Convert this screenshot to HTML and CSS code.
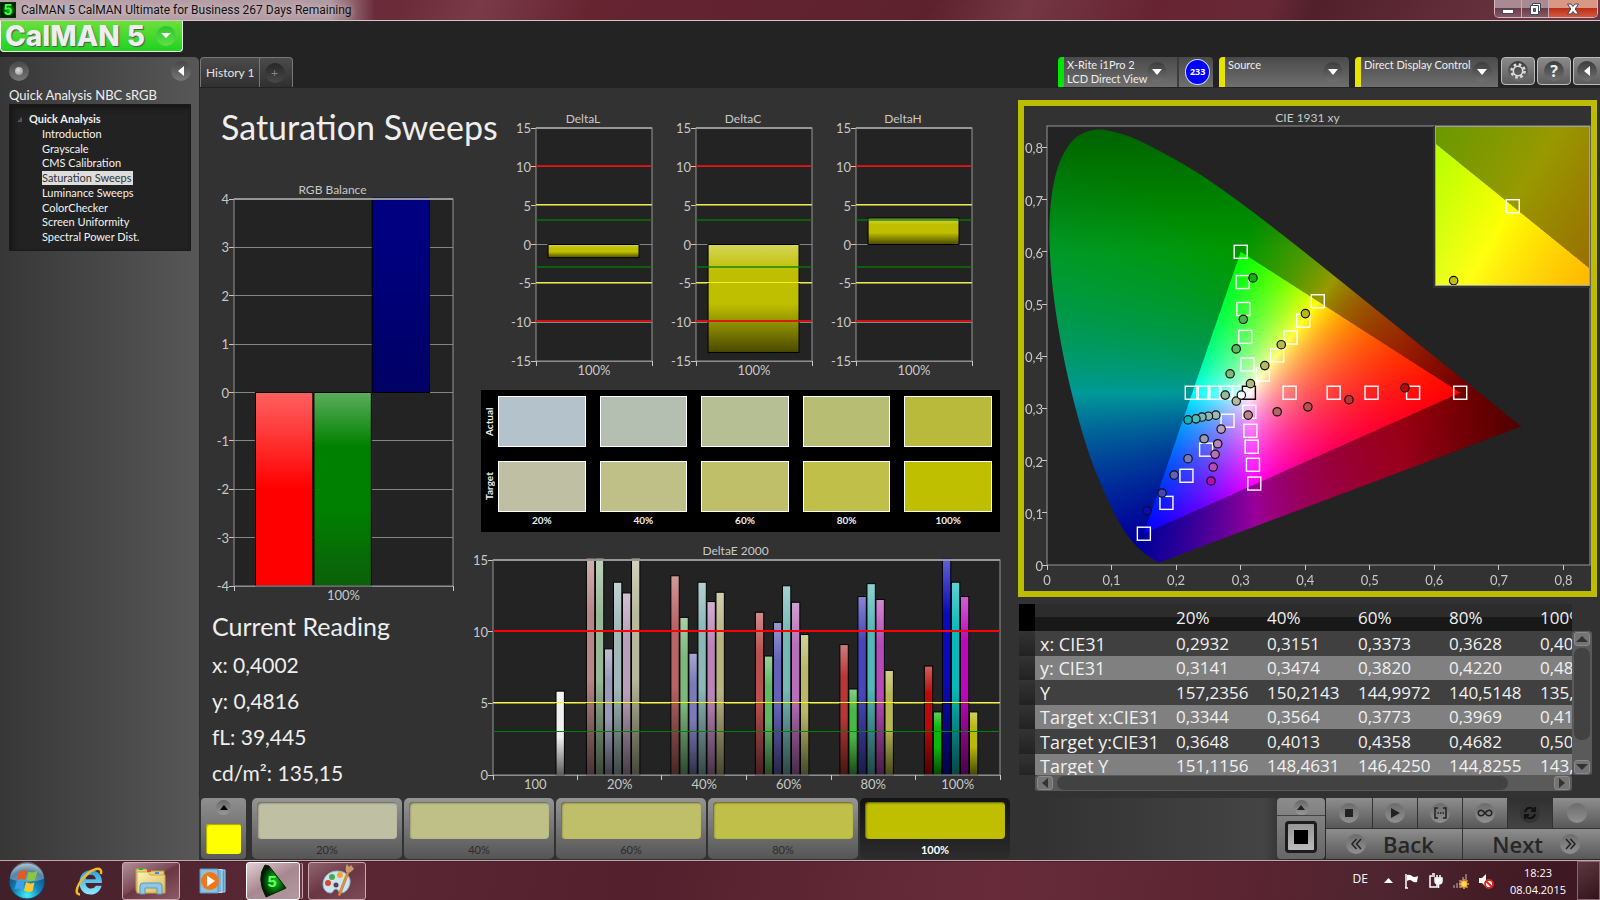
FILE: index.html
```html
<!DOCTYPE html>
<html lang="en">
<head>
    <meta charset="UTF-8">
    <meta name="viewport" content="width=device-width, initial-scale=1.0">
    <title>CalMAN 5</title>
    <link rel="stylesheet" href="styles.css">
</head>
<body>
    <!-- shared gradients and symbols -->
    <svg class="defs" aria-hidden="true">
        <defs>
            <linearGradient id="gloss" x1="0" y1="0" x2="0" y2="1">
                <stop offset="0" stop-color="#fff" stop-opacity=".35"/>
                <stop offset=".25" stop-color="#fff" stop-opacity="0"/>
                <stop offset=".55" stop-color="#000" stop-opacity="0"/>
                <stop offset="1" stop-color="#000" stop-opacity=".62"/>
            </linearGradient>
            <linearGradient id="glossRed" x1="0" y1="0" x2="0" y2="1">
                <stop offset="0" stop-color="#fff" stop-opacity=".38"/>
                <stop offset=".5" stop-color="#fff" stop-opacity="0"/>
            </linearGradient>
            <linearGradient id="glossGreen" x1="0" y1="0" x2="0" y2="1">
                <stop offset="0" stop-color="#fff" stop-opacity=".36"/>
                <stop offset=".28" stop-color="#fff" stop-opacity="0"/>
                <stop offset=".6" stop-color="#222" stop-opacity="0"/>
                <stop offset="1" stop-color="#222" stop-opacity=".35"/>
            </linearGradient>
            <linearGradient id="glossBlue" x1="0" y1="0" x2="0" y2="1">
                <stop offset=".2" stop-color="#000" stop-opacity="0"/>
                <stop offset="1" stop-color="#000" stop-opacity=".22"/>
            </linearGradient>
            <radialGradient id="orb" cx=".5" cy=".9" r=".9">
                <stop offset="0" stop-color="#3ff0ff"/>
                <stop offset=".4" stop-color="#1484b8"/>
                <stop offset=".75" stop-color="#14507e"/>
                <stop offset="1" stop-color="#8fb4c8"/>
            </radialGradient>
            <radialGradient id="glow5" cx=".55" cy=".5" r=".5">
                <stop offset="0" stop-color="#12c41c"/>
                <stop offset=".5" stop-color="#067a0c"/>
                <stop offset="1" stop-color="#021a04"/>
            </radialGradient>
            <linearGradient id="folder" x1="0" y1="0" x2="1" y2="1">
                <stop offset="0" stop-color="#fdf3b8"/>
                <stop offset="1" stop-color="#d9b95a"/>
            </linearGradient>
            <linearGradient id="ie" x1="0" y1="0" x2="0" y2="1">
                <stop offset="0" stop-color="#2aa0e0"/>
                <stop offset="1" stop-color="#8fe8ff"/>
            </linearGradient>
        </defs>
    </svg>

    <header class="titlebar">
        <svg class="app-icon" viewBox="0 0 16 16">
            <rect width="16" height="16" fill="#031"/>
            <rect x="1" y="1" width="14" height="14" fill="url(#glow5)"/>
            <text x="8" y="13" text-anchor="middle">5</text>
        </svg>
        <span class="window-title">CalMAN 5 CalMAN Ultimate for Business 267 Days Remaining</span>
        <div class="window-buttons">
            <button class="win-btn" aria-label="Minimize">
                <svg width="14" height="12"><rect x="1.500" y="6.500" width="11" height="4" fill="#fff" stroke="#444a5c"/></svg>
            </button>
            <button class="win-btn" aria-label="Restore">
                <svg width="14" height="14"><path d="M4.500 1.500h8v8h-8z" fill="#fff" stroke="#444a5c"/><path d="M2.500 3.500h8v9h-8z" fill="#fff" stroke="#444a5c"/><path d="M5.500 6.500h2v3h-2z" fill="#8a5562" stroke="#444a5c"/></svg>
            </button>
            <button class="win-btn close" aria-label="Close">
                <svg width="14" height="12"><path d="M1.500 1h3.500l2 2.500L9 1h3.500L9.200 6l3.300 5H9L7 8.500 5 11H1.500l3.300-5z" fill="#fff" stroke="#444a5c"/></svg>
            </button>
        </div>
    </header>

    <div class="brand-row">
        <button class="logo">
            <span>CalMAN</span><span>5</span>
            <i class="round logo-arrow"><svg width="10" height="6"><path d="M0 0h10L5 5z" fill="#fff"/></svg></i>
        </button>
    </div>

    <div class="workspace">
        <aside class="sidebar">
            <div class="sidebar-tools">
                <button class="round" aria-label="Options"><i class="bead"></i></button>
                <button class="round" aria-label="Collapse"><svg width="6" height="10"><path d="M6 0v10L0 5z" fill="#fff"/></svg></button>
            </div>
            <h2>Quick Analysis NBC sRGB</h2>
            <nav class="tree">
                <strong><svg width="5" height="5"><path d="M5 0v5H0z" fill="#555"/></svg>Quick Analysis</strong>
                <a href="#">Introduction</a>
                <a href="#">Grayscale</a>
                <a href="#">CMS Calibration</a>
                <a href="#" class="selected">Saturation Sweeps</a>
                <a href="#">Luminance Sweeps</a>
                <a href="#">ColorChecker</a>
                <a href="#">Screen Uniformity</a>
                <a href="#">Spectral Power Dist.</a>
            </nav>
        </aside>

        <main class="main">
            <div class="toolbar">
                <div class="tabs">
                    <button class="tab">History 1</button>
                    <button class="tab add" aria-label="Add tab"><i class="round">+</i></button>
                </div>
                <div class="devices">
                    <div class="device meter">
                        <button class="device-btn"><span>X-Rite i1Pro 2<br>LCD Direct View</span><i class="round"><svg width="10" height="6"><path d="M0 0h10L5 6z" fill="#fff"/></svg></i></button>
                        <span class="badge">233</span>
                    </div>
                    <div class="device source">
                        <button class="device-btn"><span>Source</span><i class="round"><svg width="10" height="6"><path d="M0 0h10L5 6z" fill="#fff"/></svg></i></button>
                    </div>
                    <div class="device display">
                        <button class="device-btn"><span>Direct Display Control</span><i class="round"><svg width="10" height="6"><path d="M0 0h10L5 6z" fill="#fff"/></svg></i></button>
                    </div>
                    <button class="square-btn" aria-label="Settings"><i class="round"><svg width="16" height="16" viewBox="0 0 16 16"><circle cx="8" cy="8" r="6.500" fill="none" stroke="#ddd" stroke-width="2.500" stroke-dasharray="2.550 2.550"/><circle cx="8" cy="8" r="4.700" fill="none" stroke="#ddd" stroke-width="1.600"/></svg></i></button>
                    <button class="square-btn help" aria-label="Help"><i class="round">?</i></button>
                    <button class="square-btn last" aria-label="Collapse panel"><i class="round"><svg width="6" height="10"><path d="M6 0v10L0 5z" fill="#fff"/></svg></i></button>
                </div>
            </div>

            <div class="content">
                <section class="col-left">
                    <h1>Saturation Sweeps</h1>
                    <div class="chart rgb">
                        <h3>RGB Balance</h3>
                        <svg class="plot" id="rgbBalance"></svg>
                    </div>
                    <div class="readings">
                        <h2>Current Reading</h2>
                        <p>x: 0,4002</p>
                        <p>y: 0,4816</p>
                        <p>fL: 39,445</p>
                        <p>cd/m²: 135,15</p>
                    </div>
                </section>

                <section class="col-mid">
                    <div class="deltas">
                        <div class="chart"><h3>DeltaL</h3><svg class="plot" id="deltaL"></svg></div>
                        <div class="chart"><h3>DeltaC</h3><svg class="plot" id="deltaC"></svg></div>
                        <div class="chart"><h3>DeltaH</h3><svg class="plot" id="deltaH"></svg></div>
                    </div>
                    <div class="swatches" id="swatches"></div>
                    <div class="chart delta-e">
                        <h3>DeltaE 2000</h3>
                        <svg class="plot" id="deltaE"></svg>
                    </div>
                </section>

                <section class="col-right">
                    <div class="chart cie">
                        <h3>CIE 1931 xy</h3>
                        <div class="cie-plot">
                            <canvas id="cieCanvas" width="1086" height="878"></canvas>
                            <svg class="plot" id="cie"></svg>
                            <div class="cie-inset">
                                <canvas id="insetCanvas" width="310" height="320"></canvas>
                                <svg class="plot" id="inset"></svg>
                            </div>
                        </div>
                    </div>
                    <div class="data-grid">
                        <div class="table-view">
                            <table>
                                <thead><tr><th class="row-head"></th><th class="name"></th><th>20%</th><th>40%</th><th>60%</th><th>80%</th><th>100%</th></tr></thead>
                                <tbody id="rows"></tbody>
                            </table>
                        </div>
                        <div class="vscroll">
                            <button aria-label="Scroll up"><svg width="12" height="6"><path d="M6 0l6 6H0z"/></svg></button>
                            <i class="thumb"></i>
                            <button aria-label="Scroll down"><svg width="12" height="6"><path d="M6 6l6-6H0z"/></svg></button>
                        </div>
                        <div class="hscroll">
                            <button aria-label="Scroll left"><svg width="6" height="10"><path d="M0 5l6-5v10z"/></svg></button>
                            <i class="thumb"></i>
                            <button aria-label="Scroll right"><svg width="6" height="10"><path d="M6 5L0 0v10z"/></svg></button>
                        </div>
                    </div>
                </section>
            </div>

            <footer class="bottom-bar">
                <button class="well" aria-label="Current colour"><i class="round small"><svg width="8" height="5"><path d="M4 0l4 5H0z"/></svg></i><i class="well-color"></i></button>
                <div class="steps" id="steps"></div>
                <div class="transport">
                    <div class="pattern">
                        <button class="pattern-up" aria-label="Patterns"><i class="round small"><svg width="8" height="5"><path d="M4 0l4 5H0z"/></svg></i></button>
                        <button class="pattern-box" aria-label="Window pattern"><i></i></button>
                    </div>
                    <div class="controls">
                        <button aria-label="Stop"><i class="round"><svg width="8" height="8"><path d="M0 0h8v8H0z"/></svg></i></button>
                        <button aria-label="Play"><i class="round"><svg width="9" height="10"><path d="M0 0l9 5-9 5z"/></svg></i></button>
                        <button aria-label="Read series"><i class="round"><svg width="13" height="12" fill="none" stroke="#222" stroke-width="1.500"><path d="M4 1H1v10h3M9 1h3v10H9M3.500 6h1.500M6 6h1.500M8.500 6H10"/></svg></i></button>
                        <button aria-label="Continuous"><i class="round"><svg width="16" height="8" fill="none" stroke="#222" stroke-width="1.500"><path d="M8 4C6.500 2 5.500 1.200 4 1.200a2.800 2.800 0 0 0 0 5.600C5.500 6.800 6.500 6 8 4s2.500-2.800 4-2.800a2.800 2.800 0 0 1 0 5.600C10.500 6.800 9.500 6 8 4z"/></svg></i></button>
                        <button class="on" aria-label="Refresh"><i class="round"><svg width="14" height="14" fill="none" stroke="#111" stroke-width="2"><path d="M2 6a5 5 0 0 1 9-2M12 8a5 5 0 0 1-9 2M12 1v4H8M2 13V9h4"/></svg></i></button>
                        <button aria-label="Idle"><i class="round"></i></button>
                        <button class="wide back"><i class="round"><svg width="11" height="12" fill="none" stroke="#222" stroke-width="1.500"><path d="M5.500 1L1 6l4.500 5M10 1L5.500 6l4.500 5"/></svg></i><span>Back</span></button>
                        <button class="wide next"><span>Next</span><i class="round"><svg width="11" height="12" fill="none" stroke="#222" stroke-width="1.500"><path d="M1 1l4.500 5L1 11M5.500 1L10 6l-4.500 5"/></svg></i></button>
                    </div>
                </div>
            </footer>
        </main>
    </div>

    <div class="taskbar">
        <button class="start" aria-label="Start">
            <svg width="38" height="38" viewBox="0 0 38 38">
                <circle cx="19" cy="19" r="18" fill="url(#orb)" stroke="#1b3444"/>
                <path d="M2 17a17 17 0 0 1 34 0q-17 6-34 0z" fill="#fff" opacity=".3"/>
                <path d="M11 10q4-3 8-1l-2 9q-4-2-8 0z" fill="#e8571c"/>
                <path d="M20.500 9.500q4 2 9-.5l-2.500 9q-4 2-8.500 0z" fill="#8cc63f"/>
                <path d="M8.500 19.500q4-2 8 0l-2 8q-4-2-8 0z" fill="#3f9fe8"/>
                <path d="M18 20q4 2.500 8.500.5l-2 8.500q-4 2-8.500-.5z" fill="#fdc82f"/>
            </svg>
        </button>
        <button class="task plain ie" aria-label="Internet Explorer">
            <svg width="34" height="34" viewBox="0 0 34 34">
                <path d="M29 19H12.500c.3 3.500 2.500 5.500 5.500 5.500 2.300 0 3.800-1 4.700-2.800h6C27 27.500 23 30.500 17.800 30.500 11 30.500 6.500 26 6.500 18.500S11.200 6.300 17.800 6.300C25 6.300 29.200 11.300 29 19zM12.600 15.300h10.200c-.3-2.800-2.200-4.500-4.900-4.500-2.800 0-4.800 1.700-5.300 4.500z" fill="url(#ie)"/>
                <path d="M28 10c1-4-1-6-5-5-6 1.500-13 8-17 15-3 5.500-3.500 10.500 1 10.500" fill="none" stroke="#f5b921" stroke-width="2.500"/>
            </svg>
        </button>
        <button class="task open explorer" aria-label="Explorer">
            <svg width="34" height="30" viewBox="0 0 34 30">
                <path d="M2 3h10l2 2h16v20H2z" fill="#e8cf7a" stroke="#b89a48"/>
                <path d="M3 6h11l2 3h15v18H3z" fill="url(#folder)" stroke="#c9a94f"/>
                <rect x="5" y="2" width="4" height="2" fill="#2fae3a"/><rect x="13" y="4" width="4" height="2" fill="#d84b38"/><rect x="21" y="6" width="4" height="2" fill="#3a8fe0"/>
                <path d="M6 28v-8q0-3 3-3h16q3 0 3 3v8h-5v-6H11v6z" fill="#8fc8e4" stroke="#5a9abc"/>
            </svg>
        </button>
        <button class="task plain wmp" aria-label="Media Player">
            <svg width="28" height="26" viewBox="0 0 28 26">
                <path d="M8 2h18v22H8z" fill="#4f9cc8" stroke="#a8d4ec"/><path d="M4 1.500h19v23H4z" fill="#78b4d8" stroke="#c0e0f0"/>
                <path d="M1 1h18v24H1z" fill="#8fc0dc" stroke="#5a94b8"/>
                <circle cx="11" cy="13" r="9" fill="#f0761c"/><path d="M8 7.500l8 5.500-8 5.500z" fill="#fff"/>
            </svg>
        </button>
        <button class="task open active" aria-label="CalMAN">
            <svg width="30" height="34" viewBox="0 0 30 34">
                <path d="M7 1l4 1 17 22-20 9Q-2 14 7 1z" fill="url(#glow5)" stroke="#020"/>
                <text x="14" y="23" text-anchor="middle">5</text>
            </svg>
        </button>
        <button class="task open paint" aria-label="Paint">
            <svg width="34" height="34" viewBox="0 0 34 34">
                <path d="M17 7c9 0 14 6 13 12s-5 10-9 10c-3 0-2-4-5-4s-2 3-5 4c-4 0-8-3-8-9S8 7 17 7z" fill="#cfe4f2" stroke="#8fb4cc"/>
                <circle cx="8" cy="19" r="3" fill="#d9442c"/><circle cx="12" cy="13" r="3" fill="#3fae49"/><circle cx="20" cy="11" r="3" fill="#f2a828"/><circle cx="16" cy="21" r="2.500" fill="#5a4048"/>
                <path d="M27 8l2 1-9 23-2-1z" fill="#e8953a" stroke="#b06a20" stroke-width=".6"/>
                <path d="M26 8q-1-5 1-8l2 3 2-2 3 4q-3 3-5 4z" fill="#c99a6a"/>
            </svg>
        </button>
        <div class="tray">
            <span class="lang">DE</span>
            <svg class="more" width="9" height="5"><path d="M4.500 0L9 5H0z" fill="#fff"/></svg>
            <svg width="16" height="16" viewBox="0 0 16 16"><path d="M2 1v14M1 15h3" stroke="#fff" stroke-width="1.500"/><path d="M3 2q3-1 5 1t6 0l-1 6q-3 1-5-1T3 8z" fill="#fff"/></svg>
            <svg width="16" height="16" viewBox="0 0 16 16" fill="none" stroke="#fff" stroke-width="1.500"><path d="M7 3H2v11h7V11M4 1h3"/><path d="M7 5h7v3q0 3-3.500 3T7 8zM9 2v3M12 2v3M10.500 11v4" /><path d="M8 6h5v2q0 2-2.500 2T8 8z" fill="#fff"/></svg>
            <svg width="18" height="16" viewBox="0 0 18 16"><path d="M1 12h2v3H1zM4 10h2v5H4zM7 7h2v8H7zM10 4h2v11h-2zM13 1h2v14h-2z" fill="#8a6a72"/><circle cx="12" cy="11" r="3" fill="#ffd23a"/><path d="M12 6v10M7 11h10M8.500 7.500l7 7M15.500 7.500l-7 7" stroke="#f5a81c" stroke-width="1.500"/><circle cx="12" cy="11" r="2.500" fill="#ffd95a"/></svg>
            <svg width="16" height="16" viewBox="0 0 16 16"><path d="M1 5h3l4-4v13l-4-4H1z" fill="#fff"/><circle cx="11" cy="11" r="4" fill="#fff" stroke="#e0281c" stroke-width="1.800"/><path d="M8 8l6 6" stroke="#e0281c" stroke-width="1.800"/></svg>
            <time class="clock">18:23<br>08.04.2015</time>
            <button class="show-desktop" aria-label="Show desktop"></button>
        </div>
    </div>

    <script src="charts.js"></script>
</body>
</html>
```
FILE: styles.css
```css
* {
    box-sizing: border-box;
}

body {
    margin: 0;
    height: 100vh;
    display: flex;
    flex-direction: column;
    overflow: hidden;
    background: #232323;
    color: #eee;
    font-family: Lato, "Liberation Sans", sans-serif;
    font-size: 12px;
}

h1, h2, h3, p {
    margin: 0;
    font-weight: 400;
}

button {
    border: 0;
    padding: 0;
    margin: 0;
    background: none;
    color: inherit;
    font: inherit;
    cursor: pointer;
}

i {
    font-style: normal;
}

svg {
    display: block;
    flex: none;
}

.defs {
    position: absolute;
    width: 0;
    height: 0;
}

.round {
    display: flex;
    align-items: center;
    justify-content: center;
    flex: none;
    width: 20px;
    height: 20px;
    border-radius: 50%;
    background: linear-gradient(#3c3c3c, #707070);
}

.round.small {
    width: 15px;
    height: 15px;
    background: linear-gradient(#666, #999);
}

/* window title */
.titlebar {
    display: flex;
    align-items: center;
    flex: none;
    height: 21px;
    border-bottom: 1px solid #d9c3ca;
    background:
        linear-gradient(90deg, rgba(190, 170, 178, .95) 0, rgba(185, 165, 172, .9) 330px, rgba(150, 110, 120, 0) 375px),
        linear-gradient(115deg, #6b2b39 25%, #7a3a47 30%, #662431 37%, #5d212e 58%, #743744 64%, #672331 72%, #682936 79%, #50202b 82%, #6b3541 96%);
}

.app-icon {
    width: 16px;
    height: 16px;
}

.app-icon text {
    font: bold 14px Inter, sans-serif;
    fill: #4f4;
}

.window-title {
    margin-left: 5px;
    color: #111;
    font: 12px/20px Roboto, sans-serif;
    white-space: nowrap;
    text-shadow: 0 0 6px rgba(255, 255, 255, .7);
}

.window-buttons {
    display: flex;
    align-self: flex-start;
    margin-left: auto;
    margin-right: 2px;
    border: 1px solid #d0b9bf;
    border-top: 0;
    border-radius: 0 0 5px 5px;
    overflow: hidden;
}

.win-btn {
    display: flex;
    align-items: center;
    justify-content: center;
    width: 27px;
    height: 17px;
    border-right: 1px solid #c7aab2;
    background: linear-gradient(#a98a93 45%, #6d3b48 50%, #855a66);
}

.win-btn.close {
    width: 48px;
    border-right: 0;
    background: linear-gradient(#d99884 45%, #b8301a 50%, #d8583c);
}

/* logo */
.brand-row {
    flex: none;
    height: 36px;
}

.logo {
    display: flex;
    align-items: center;
    gap: 7px;
    width: 183px;
    height: 31px;
    padding-left: 4px;
    border: 1px solid #efe;
    border-top: 0;
    border-radius: 0 0 4px 4px;
    background: linear-gradient(#6be03c, #20d220);
    color: #eee;
    font: 800 28px/28px Inter, sans-serif;
    text-shadow: 1px 1px 1px #555;
}

.logo-arrow {
    margin-left: auto;
    margin-right: 6px;
    background: linear-gradient(#2cc42c, #62e048);
}

.workspace {
    display: flex;
    flex: 1;
    min-height: 0;
}

/* sidebar */
.sidebar {
    flex: none;
    width: 199px;
    padding: 4px 8px 0 9px;
    border-radius: 0 5px 0 0;
    background: linear-gradient(90deg, #373737, #575757);
}

.sidebar-tools {
    display: flex;
    justify-content: space-between;
}

.sidebar-tools .round {
    background: linear-gradient(#474747, #777);
}

.bead {
    width: 8px;
    height: 8px;
    border-radius: 50%;
    background: radial-gradient(circle at 40% 40%, #ddd, #888);
}

.sidebar h2 {
    margin-top: 5px;
    font-size: 13px;
    line-height: 18px;
    white-space: nowrap;
}

.tree {
    display: flex;
    flex-direction: column;
    justify-content: space-between;
    align-items: flex-start;
    height: 147px;
    padding: 7px 0 6px 32px;
    border: 1px solid #1a1a1a;
    background: #222;
    box-shadow: inset 3px 3px 5px #161616;
    font-size: 11px;
    line-height: 14px;
}

.tree strong {
    display: flex;
    align-items: center;
    gap: 7px;
    margin-left: -25px;
}

.tree a {
    padding-right: 1px;
    color: #f2f2f2;
    text-decoration: none;
}

.tree .selected {
    background: #ddd;
    color: #333;
}

/* toolbar */
.main {
    display: flex;
    flex-direction: column;
    flex: 1;
    min-width: 0;
}

.toolbar {
    display: flex;
    justify-content: space-between;
    flex: none;
    height: 31px;
    padding-left: 1px;
}

.tabs,
.devices {
    display: flex;
}

.tabs {
    height: 30px;
    border: 1px solid #777;
    border-bottom: 0;
    border-radius: 4px 4px 0 0;
    background: linear-gradient(#4b4b4b, #303030);
}

.tab {
    padding: 0 4px 0 5px;
    color: #e4e4e4;
    font-size: 12px;
}

.tab.add {
    width: 33px;
    border-left: 1px solid #777;
    color: #888;
}

.tab.add .round {
    background: linear-gradient(#272727, #484848);
}

.devices {
    gap: 6px;
}

.device {
    display: flex;
    height: 30px;
    border-left: 6px solid #e8e400;
    border-radius: 4px 4px 0 0;
    background: linear-gradient(#4a4a4a, #6f6f6f);
}

.device.meter {
    width: 155px;
    border-left-color: #00e800;
}

.device.source {
    width: 130px;
}

.device.display {
    width: 143px;
}

.device-btn {
    display: flex;
    align-items: flex-start;
    justify-content: space-between;
    flex: 1;
    padding: 1px 6px 0 3px;
    font-size: 11px;
    line-height: 14px;
    text-align: left;
    white-space: nowrap;
}

.device-btn .round {
    margin-top: 4px;
}

.meter .device-btn {
    padding-right: 10px;
    border-right: 2px solid #3c3c3c;
}

.badge {
    width: 26px;
    height: 26px;
    margin: 2px 3px 0 6px;
    border: 1px solid #cfd4ff;
    border-radius: 50%;
    background: #00f;
    color: #fff;
    font: bold 9px/24px "Open Sans", sans-serif;
    text-align: center;
}

.square-btn {
    display: flex;
    align-items: center;
    justify-content: center;
    width: 34px;
    height: 28px;
    margin-left: -4px;
    border: 1px solid #bbb;
    border-radius: 4px;
    background: linear-gradient(#8a8a8a, #5c5c5c);
}

.display + .square-btn {
    margin-left: -3px;
}

.square-btn.help {
    font: bold 16px "Open Sans", sans-serif;
}

.square-btn.last {
    width: 27px;
    border-right: 0;
    border-radius: 4px 0 0 4px;
}

/* dashboard */
.content {
    display: grid;
    grid-template-columns: 270fr 539fr 590fr;
    flex: 1;
    min-height: 0;
    padding-left: 1px;
    border-left: 1px solid #282828;
    background: #323232;
}

.content > section {
    display: flex;
    flex-direction: column;
    min-width: 0;
    min-height: 0;
}

.col-left h1 {
    height: 88px;
    padding-left: 20px;
    font-size: 34px;
    line-height: 78px;
    white-space: nowrap;
}

.chart {
    display: flex;
    flex-direction: column;
    min-width: 0;
    min-height: 0;
    padding: 0 0 23px 22px;
}

.chart h3 {
    flex: none;
    height: 20px;
    margin-left: -22px;
    color: #c8c8c8;
    font-size: 12px;
    line-height: 21px;
    text-align: center;
}

.plot {
    flex: 1;
    width: 100%;
    min-height: 0;
    overflow: visible;
}

.plot line {
    shape-rendering: crispEdges;
}

.plot text {
    fill: #c8c8c8;
    font-size: 13px;
}

.chart.rgb {
    flex: 1;
    margin: 3px 18px 0 11px;
}

.readings {
    flex: none;
    padding: 0 0 7px 11px;
    font-size: 21px;
    line-height: 36px;
}

.readings h2 {
    margin-bottom: 3px;
    font-size: 25px;
    line-height: 35px;
}

.deltas {
    display: grid;
    grid-template-columns: repeat(3, 1fr);
    gap: 22px;
    flex: 303;
    min-height: 0;
    padding: 20px 38px 0 43px;
}

.swatches {
    display: grid;
    grid-template-columns: 2px repeat(5, 1fr);
    grid-template-rows: 51px 51px auto;
    gap: 14px;
    flex: none;
    height: 142px;
    margin: 6px 10px 0;
    padding: 6px 8px 0 1px;
    background: #000;
}

.swatches .side {
    width: 14px;
    writing-mode: vertical-rl;
    transform: rotate(180deg);
    font-size: 10px;
    font-weight: 700;
    line-height: 14px;
    text-align: center;
}

.swatches .patch {
    border: 1px solid #fff;
}

.swatches .caption {
    margin-top: -13px;
    font-size: 10px;
    font-weight: 700;
    line-height: 14px;
    text-align: center;
}

.chart.delta-e {
    flex: 258;
    margin: 8px 10px 0 0;
}

/* chromaticity diagram */
.chart.cie {
    flex: 1;
    margin: 12px 3px 0 8px;
    padding: 0 1px 26px 23px;
    border: 6px solid #bdbd00;
}

.chart.cie h3 {
    line-height: 24px;
}

.cie-plot {
    position: relative;
    display: flex;
    flex: 1;
    min-height: 0;
    background: #232323;
}

.cie-plot canvas {
    position: absolute;
    inset: 0;
    width: 100%;
    height: 100%;
}

.cie-plot .plot {
    position: relative;
}

.cie-inset {
    position: absolute;
    top: 0;
    right: 0;
    display: flex;
    width: 29%;
    height: 37%;
    border-left: 2px solid #323232;
    border-bottom: 2px solid #323232;
}

.cie-inset .plot {
    overflow: hidden;
    border: 1px solid #a0a0a0;
}

/* data grid */
.data-grid {
    display: grid;
    grid-template-columns: 16px 1fr 20px;
    grid-template-rows: 27px 144px 16px;
    flex: none;
    margin: 7px 8px 7px 9px;
}

.table-view {
    grid-area: 1 / 1 / 3 / 3;
    overflow: hidden;
}

table {
    width: 608px;
    table-layout: fixed;
    border-collapse: collapse;
    font: 17px/24px "Open Sans", sans-serif;
    color: #f0f0f0;
}

th,
td {
    width: 91px;
    padding: 0 0 0 4px;
    font-weight: 400;
    text-align: left;
    white-space: nowrap;
}

thead tr {
    height: 27px;
    background: linear-gradient(#2c2c2c 48%, #181818 50%);
}

tbody tr {
    height: 25px;
    background: #404040;
}

tbody tr:nth-child(even) {
    height: 24px;
    background: #808080;
}

tbody .row-head {
    background: linear-gradient(#333, #222);
}

.row-head {
    width: 16px;
    padding: 0;
}

thead .row-head {
    background: #000;
}

.name {
    width: 137px;
}

tbody .name {
    padding-left: 5px;
    font-size: 18px;
}

.vscroll,
.hscroll {
    display: flex;
    align-items: center;
    background: #5a5a5a;
    border-radius: 3px;
}

.vscroll {
    grid-area: 2 / 3;
    flex-direction: column;
}

.hscroll {
    grid-area: 3 / 2;
}

.vscroll button,
.hscroll button {
    display: flex;
    align-items: center;
    justify-content: center;
    width: 16px;
    height: 14px;
    margin: 1px 2px;
    border: 1px solid #8a8a8a;
    border-radius: 3px;
    background: #747474;
    fill: #333;
}

.thumb {
    border-radius: 7px;
    background: #424242;
}

.vscroll .thumb {
    width: 16px;
    height: 92px;
    margin: 1px 0 auto;
}

.hscroll .thumb {
    width: 84%;
    height: 14px;
    margin: 0 auto 0 2px;
}

/* bottom bar */
.bottom-bar {
    display: flex;
    flex: none;
    height: 62px;
    padding: 0 0 1px 2px;
    background: linear-gradient(90deg, #323232 60%, #444 76%, #2a2a2a 78%);
}

.well {
    display: flex;
    flex-direction: column;
    align-items: center;
    justify-content: space-between;
    width: 45px;
    padding: 2px 0 5px;
    border-radius: 4px;
    background: linear-gradient(#8f8f8f, #5a5a5a);
}

.well-color {
    width: 35px;
    height: 30px;
    border-radius: 3px;
    background: #ff0;
    box-shadow: inset 1px 1px 1px #a8a800;
}

.steps {
    display: flex;
    gap: 2px;
    margin-left: 6px;
}

.step {
    width: 150px;
    padding: 4px 5px 0;
    border-radius: 5px;
    background: linear-gradient(#959595, #555);
    color: #2c2c2c;
    font-size: 11px;
    line-height: 21px;
}

.step i {
    display: block;
    height: 37px;
    border-radius: 4px;
    box-shadow: inset 1px 1px 2px rgba(0, 0, 0, .5);
}

.step.current {
    background: linear-gradient(#141414, #2c2c2c);
    color: #fff;
    font-weight: 700;
}

.transport {
    display: flex;
    gap: 1px;
    margin-left: auto;
    fill: #222;
}

.pattern {
    display: flex;
    flex-direction: column;
    width: 48px;
    border-radius: 4px;
    overflow: hidden;
    background: linear-gradient(#8c8c8c, #666);
}

.pattern-up {
    display: flex;
    justify-content: center;
    height: 18px;
    padding-top: 2px;
    border-bottom: 1px solid #444;
}

.pattern-box {
    display: flex;
    align-items: center;
    justify-content: center;
    width: 32px;
    height: 32px;
    margin: 5px auto 0;
    border: 3px solid #1c1c1c;
    border-radius: 4px;
    background: linear-gradient(#969696, #bbb);
}

.pattern-box i {
    width: 14px;
    height: 14px;
    background: #000;
}

.controls {
    display: grid;
    grid-template-columns: 46px repeat(4, 44px) 47px;
    grid-template-rows: 30px 30px;
    gap: 1px;
    background: #333;
}

.controls button {
    display: flex;
    align-items: center;
    justify-content: center;
    background: linear-gradient(#8e8e8e, #585858);
}

.controls .round {
    background: linear-gradient(#6c6c6c, #909090);
}

.controls .on {
    background: linear-gradient(#303030, #444);
}

.controls .on .round {
    background: #333;
}

.controls .wide {
    grid-column: span 3;
    gap: 17px;
    color: #262626;
    font: 600 22px/28px "Open Sans", sans-serif;
}

.controls .back {
    justify-content: flex-start;
    padding-left: 20px;
}

.controls .next {
    justify-content: flex-end;
    padding-right: 20px;
}

/* taskbar */
.taskbar {
    display: flex;
    align-items: center;
    flex: none;
    height: 40px;
    border-top: 1px solid #c4a7ae;
    box-shadow: inset 0 1px 0 #47202a;
    background: linear-gradient(100deg, #40202a 0, #5b2835 18%, #54202d 40%, #682c39 62%, #5a2430 78%, #4e2530 86%, #3e1822 97%);
}

.start {
    margin-left: 8px;
}

.task {
    display: flex;
    align-items: center;
    justify-content: center;
    height: 38px;
}

.task.plain {
    width: 64px;
}

.task.ie {
    margin-left: 12px;
}

.task.open {
    width: 58px;
    border: 1px solid #c9a8b0;
    border-radius: 3px;
    background: linear-gradient(150deg, #b09099, #7d4b58 45%, #6b3643 50%, #8c5a67);
}

.task.wmp {
    width: 66px;
}

.task.active {
    width: 54px;
    border-color: #fff;
    background: linear-gradient(150deg, #e0d0d4, #a88790 50%, #b39aa1);
    box-shadow: 3px 0 0 -1px #6b3643, 4px 0 0 -1px #c9a8b0;
}

.task.active text {
    font: bold 15px Inter, sans-serif;
    fill: #6f6;
}

.task.paint {
    margin-left: 8px;
    background: linear-gradient(150deg, #8d6670, #6b3643 50%, #7d4b58);
}

.tray {
    display: flex;
    align-items: center;
    align-self: stretch;
    gap: 8px;
    margin-left: auto;
    font: 12px/17px "Open Sans", sans-serif;
    color: #fff;
}

.lang {
    margin-right: 8px;
    padding-bottom: 5px;
}

.more {
    margin-right: 3px;
}

.clock {
    margin: 0 3px 0 8px;
    font-size: 11px;
    text-align: center;
}

.show-desktop {
    align-self: stretch;
    width: 23px;
    border: 1px solid #8a6670;
    background: linear-gradient(150deg, #5c3841, #33141c);
}
```
FILE: charts.js
```js
const NS = 'http://www.w3.org/2000/svg';

function add(parent, name, attrs, text) {
    const el = document.createElementNS(NS, name);
    for (const key in attrs) el.setAttribute(key, attrs[key]);
    if (text !== undefined) el.textContent = text;
    parent.appendChild(el);
    return el;
}

const pct = v => (v * 100).toFixed(2) + '%';
const AXIS = '#969696';

// bar chart with percent coordinates, so it follows its container
function barChart(id, opt) {
    const svg = document.getElementById(id);
    const yPos = v => (opt.max - v) / (opt.max - opt.min);
    add(svg, 'rect', { width: '100%', height: '100%', fill: '#232323' });

    for (let v = opt.min; v <= opt.max; v += opt.step) {
        const y = pct(yPos(v));
        add(svg, 'line', { x1: 0, x2: '100%', y1: y, y2: y, stroke: '#858585' });
        add(svg, 'line', { x1: -5, x2: 0, y1: y, y2: y, stroke: '#c8c8c8' });
        add(svg, 'text', { x: -5, y: y, dy: 5, 'text-anchor': 'end' }, v);
    }

    opt.bars.forEach(bar => {
        const over = bar.value > opt.max;
        const top = Math.max(0, yPos(Math.max(0, bar.value)));
        const bottom = Math.min(1, yPos(Math.min(0, bar.value)));
        const box = { x: pct(bar.x), y: pct(top), width: pct(bar.w), height: pct(bottom - top) };
        add(svg, 'rect', { ...box, fill: bar.color });
        add(svg, 'rect', { ...box, fill: `url(#${bar.gloss || 'gloss'})`, stroke: '#000' });
        if (over) add(svg, 'rect', { x: box.x, y: -2, width: box.width, height: 2, fill: bar.color, opacity: .5 });
    });

    add(svg, 'rect', { width: '100%', height: '100%', fill: 'none', stroke: AXIS });
    add(svg, 'line', { x1: 0, x2: '100%', y1: 0, y2: 0, stroke: AXIS, 'stroke-width': 2 });

    (opt.limits || []).forEach(([v, color, width, opacity]) => {
        const y = pct(yPos(v));
        add(svg, 'line', { x1: 0, x2: '100%', y1: y, y2: y, stroke: color, 'stroke-width': width, opacity, transform: 'translate(0 -1)' });
    });

    const n = opt.labels.length;
    for (let i = 0; i <= n; i++) {
        const tick = add(svg, 'svg', { x: pct(i / n), y: '100%', overflow: 'visible' });
        add(tick, 'line', { x1: 0, x2: 0, y1: 0, y2: 5, stroke: '#c8c8c8' });
        if (i < n) add(svg, 'text', { x: pct((i + .5) / n), y: '100%', dy: 14, 'text-anchor': 'middle' }, opt.labels[i]);
    }
}

barChart('rgbBalance', {
    min: -4, max: 4, step: 1, labels: ['100%'],
    bars: [
        { x: .098, w: .262, value: -9, color: '#f00', gloss: 'glossRed' },
        { x: .365, w: .262, value: -5, color: '#008000', gloss: 'glossGreen' },
        { x: .631, w: .262, value: 9, color: '#000080', gloss: 'glossBlue' }
    ]
});

const deltaLimits = [];
[1, -1].forEach(s => deltaLimits.push(
    [10 * s, '#e01010', 2, .9], [5 * s, '#f4f400', 1, 1], [3 * s, '#008000', 2, .65]
));

[['deltaL', -1.7], ['deltaC', -13.9], ['deltaH', 3.4]].forEach(([id, value]) => {
    barChart(id, {
        min: -15, max: 15, step: 5, labels: ['100%'], limits: deltaLimits,
        bars: [{ x: .104, w: .784, value, color: '#bfbf00' }]
    });
});

const hues = {
    r: ['#b88686', '#b86464', '#b85050', '#b83636', '#b80a0a'],
    g: ['#9ab896', '#7cb87a', '#62b862', '#46b846', '#0ab80a'],
    b: ['#9a9ab8', '#7a7ab8', '#6262b8', '#4646b8', '#0a0ab8'],
    c: ['#a2b8b8', '#8cb8b8', '#76b8b8', '#52b8b8', '#0ab8b8'],
    m: ['#b8a0b8', '#b886b8', '#b86eb8', '#b84ab8', '#b80ab8'],
    y: ['#b8b89c', '#b8b482', '#b8b86a', '#b8b84e', '#b8b80a']
};

const deltaE = [
    [17, 16, 8.8, 13.45, 12.7, 16],
    [13.9, 11, 8.5, 13.45, 12.1, 12.75],
    [11.35, 8.3, 10.65, 13.2, 12.05, 9.8],
    [9.1, 6, 12.45, 13.35, 12.25, 7.3],
    [7.6, 4.4, 17, 13.45, 12.45, 4.4]
];

const slot = .0178;
const eBars = [{ x: .0175 + 6 * slot, w: .0165, value: 5.85, color: '#f0f0f0' }];
deltaE.forEach((group, g) => group.forEach((value, i) => {
    eBars.push({ x: (g + 1) / 6 + .0175 + i * slot, w: .0165, value, color: hues['rgbcmy'[i]][g] });
}));

barChart('deltaE', {
    min: 0, max: 15, step: 5, labels: ['100', '20%', '40%', '60%', '80%', '100%'], bars: eBars,
    limits: [[10, '#f00', 2, 1], [5, '#ff0', 1, 1], [3, '#008000', 1, 1]]
});

/* ---- CIE 1931 ---- */
const locus = [
    [.1741, .005], [.1714, .0051], [.1644, .0109], [.1566, .0177], [.144, .0297], [.1241, .0578], [.1096, .0868],
    [.0913, .1327], [.0687, .2007], [.0454, .295], [.0235, .4127], [.0082, .5384], [.0039, .6548], [.0139, .7502],
    [.0389, .812], [.0743, .8338], [.1142, .8262], [.1547, .8059], [.2296, .7543], [.3016, .6923],
    [.3731, .6245], [.4441, .5547], [.5125, .4866], [.5752, .4242], [.627, .3725], [.6915, .3083], [.719, .2809], [.7347, .2653]
];

function xyColor(x, y) {
    const X = x / y, Z = (1 - x - y) / y;
    let rgb = [
        3.2406 * X - 1.5372 - .4986 * Z,
        -.9689 * X + 1.8758 + .0415 * Z,
        .0557 * X - .204 + 1.057 * Z
    ];
    const outside = Math.min(...rgb) < 0;
    const peak = Math.max(...rgb);
    rgb = rgb.map(c => Math.max(0, c) / peak);
    // colours outside the sRGB gamut are shown dimmed
    const dim = outside ? .6 - 1.6 * Math.max(0, x - .55) - .9 * Math.max(0, y - .6) : 1;
    return rgb.map(c => c * dim * 255);
}

function paintCie(id, x0, x1, y0, y1) {
    const canvas = document.getElementById(id);
    const w = canvas.width, h = canvas.height;
    const layer = document.createElement('canvas');
    layer.width = w;
    layer.height = h;
    const lctx = layer.getContext('2d');
    const img = lctx.createImageData(w, h);
    for (let j = 0; j < h; j++) {
        for (let i = 0; i < w; i++) {
            const y = Math.max(.001, y1 - (j + .5) / h * (y1 - y0));
            const c = xyColor(x0 + (i + .5) / w * (x1 - x0), y);
            const p = (j * w + i) * 4;
            img.data[p] = c[0];
            img.data[p + 1] = c[1];
            img.data[p + 2] = c[2];
            img.data[p + 3] = 255;
        }
    }
    lctx.putImageData(img, 0, 0);

    // smooth curve through the locus points
    const pts = locus.map(([x, y]) => [(x - x0) / (x1 - x0) * w, (y1 - y) / (y1 - y0) * h]);
    const ctx = canvas.getContext('2d');
    ctx.beginPath();
    ctx.moveTo(...pts[0]);
    for (let i = 0; i < pts.length - 1; i++) {
        const a = pts[Math.max(0, i - 1)], b = pts[i], c = pts[i + 1], d = pts[Math.min(pts.length - 1, i + 2)];
        ctx.bezierCurveTo(
            b[0] + (c[0] - a[0]) / 6, b[1] + (c[1] - a[1]) / 6,
            c[0] - (d[0] - b[0]) / 6, c[1] - (d[1] - b[1]) / 6,
            c[0], c[1]
        );
    }
    ctx.closePath();
    ctx.clip();
    ctx.drawImage(layer, 0, 0);
}

const MAX = .841;
paintCie('cieCanvas', 0, MAX, 0, MAX);
paintCie('insetCanvas', .3943, .4443, .48, .5306);

const cie = document.getElementById('cie');
add(cie, 'rect', { width: '100%', height: '100%', fill: 'none', stroke: AXIS });
for (let i = 0; i <= 8; i++) {
    const label = i ? '0,' + i : '0';
    const v = pct(i / 10 / MAX), u = pct(1 - i / 10 / MAX);
    add(cie, 'line', { x1: -5, x2: 0, y1: u, y2: u, stroke: '#c8c8c8' });
    add(cie, 'text', { x: -4, y: u, dy: 6, 'text-anchor': 'end' }, label);
    const tick = add(cie, 'svg', { x: v, y: '100%', overflow: 'visible' });
    add(tick, 'line', { x1: 0, x2: 0, y1: 0, y2: 5, stroke: '#c8c8c8' });
    add(cie, 'text', { x: v, y: '100%', dy: 20, 'text-anchor': 'middle' }, label);
}

function square(svg, u, v, stroke) {
    const g = add(svg, 'svg', { x: pct(u), y: pct(v), overflow: 'visible' });
    add(g, 'rect', { x: -6.5, y: -6.5, width: 13, height: 13, fill: 'none', stroke, 'stroke-width': 1.4 });
}

function dot(svg, u, v, fill) {
    add(svg, 'circle', { cx: pct(u), cy: pct(v), r: 4.2, fill, stroke: '#111', 'stroke-width': 1.2 });
}

const targets = [
    [.3105, .384], [.307, .437], [.304, .4905], [.303, .542], [.3, .6],
    [.3344, .3648], [.3564, .4013], [.3773, .4358], [.3969, .4682], [.4193, .5053],
    [.3757, .33], [.444, .33], [.5026, .33], [.567, .33], [.64, .33],
    [.296, .33], [.2778, .33], [.2597, .33], [.2422, .33], [.2243, .33],
    [.3133, .2935], [.315, .257], [.317, .2266], [.319, .192], [.321, .156],
    [.2796, .2764], [.2464, .2209], [.216, .171], [.185, .119], [.15, .06]
];
targets.forEach(([x, y]) => square(cie, x / MAX, 1 - y / MAX, '#fff'));
square(cie, .3127 / MAX, 1 - .33 / MAX, '#000');

const measured = {
    g: [[.276, .3255], [.2836, .3663], [.293, .414], [.304, .4707], [.319, .55]],
    r: [[.3116, .2872], [.3565, .2936], [.404, .303], [.4677, .3166], [.5545, .3395]],
    c: [[.2615, .287], [.25, .285], [.24, .2834], [.2307, .28], [.2184, .278]],
    m: [[.2697, .2604], [.2644, .2323], [.2604, .2119], [.2574, .1876], [.254, .161]],
    b: [[.2434, .2419], [.2184, .2036], [.1969, .1723], [.1782, .1378], [.155, .104]],
    y: [[.2932, .3141], [.3151, .3474], [.3373, .382], [.3628, .422], [.4002, .4816]]
};
for (const key in measured) {
    measured[key].forEach(([x, y], i) => dot(cie, x / MAX, 1 - y / MAX, hues[key][i]));
}
dot(cie, .301 / MAX, 1 - .3255 / MAX, '#fff');

const inset = document.getElementById('inset');
square(inset, .5, .5, '#fff');
dot(inset, .115, .97, '#bfbf00');

/* ---- swatches and step buttons ---- */
const steps = ['20%', '40%', '60%', '80%', '100%'];
const actual = ['#b4c2cc', '#b4bfb2', '#b6bf94', '#b8bd74', '#b9b93c'];
const target = ['#bfbfa4', '#bfbf88', '#bfbf6a', '#bfbf4a', '#bfbf00'];

const row = (name, colors) => `<span class="side">${name}</span>` +
    colors.map(c => `<i class="patch" style="background:${c}"></i>`).join('');
document.getElementById('swatches').innerHTML =
    row('Actual', actual) + row('Target', target) + '<span></span>' +
    steps.map(s => `<span class="caption">${s}</span>`).join('');

document.getElementById('steps').innerHTML = steps.map((s, i) =>
    `<button class="step${i === 4 ? ' current' : ''}"><i style="background:${target[i]}"></i>${s}</button>`).join('');

const table = [
    ['x: CIE31', '0,2932', '0,3151', '0,3373', '0,3628', '0,4002'],
    ['y: CIE31', '0,3141', '0,3474', '0,3820', '0,4220', '0,4816'],
    ['Y', '157,2356', '150,2143', '144,9972', '140,5148', '135,1500'],
    ['Target x:CIE31', '0,3344', '0,3564', '0,3773', '0,3969', '0,4193'],
    ['Target y:CIE31', '0,3648', '0,4013', '0,4358', '0,4682', '0,5053'],
    ['Target Y', '151,1156', '148,4631', '146,4250', '144,8255', '143,3800']
];
document.getElementById('rows').innerHTML = table.map(([name, ...cells]) =>
    `<tr><td class="row-head"></td><td class="name">${name}</td>` +
    cells.map(c => `<td>${c}</td>`).join('') + '</tr>').join('');
```
